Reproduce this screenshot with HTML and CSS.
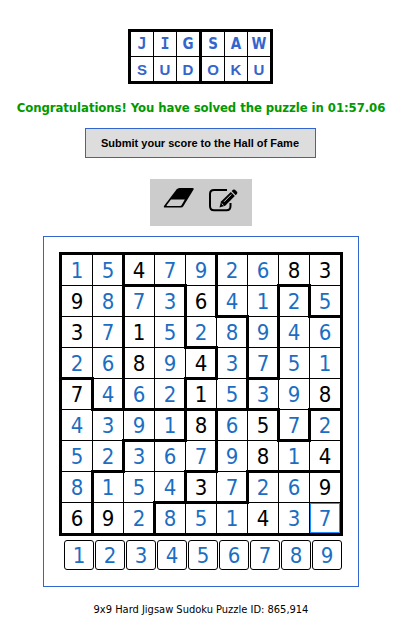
FILE: index.html
```html
<!DOCTYPE html>
<html lang="en">
<head>
<meta charset="utf-8">
<title>Jigsaw Sudoku</title>
<link rel="stylesheet" href="styles.css">
</head>
<body>
<main class="page">
  <div class="logo">
    <div class="logo-half">
      <b class="top slab">J</b><b class="top slab">I</b><b class="top">G</b>
      <b>S</b><b>U</b><b>D</b>
    </div>
    <div class="logo-half">
      <b class="top">S</b><b class="top">A</b><b class="top">W</b>
      <b>O</b><b>K</b><b>U</b>
    </div>
  </div>
  <p class="message">Congratulations! You have solved the puzzle in 01:57.06</p>
  <button class="submit">Submit your score to the Hall of Fame</button>
  <div class="tools">
    <svg class="eraser" width="32" height="22" viewBox="0 0 32 22">
      <path d="M16.500 1H29.500Q31.500 1 30.400 2.800L20.300 19.300Q19.500 20.600 18 20.600H2Q0 20.600 1.200 18.800L13.500 2.500Q14.700 1 16.500 1Z"/>
      <path class="paper" d="M8 12.500H21.800L18.500 18.200Q18 19 17 19H4.200Q3 19 3.800 17.900Z"/>
    </svg>
    <svg class="pencil" width="29" height="24" viewBox="0 0 29 24">
      <path class="line" d="M18 2H5Q1 2 1 6V18Q1 22.300 5 22.300H17.500Q21.500 22.300 21.500 18V15"/>
      <path d="M10.500 19.500L12 13.500L21.800 4L25.800 8L16.200 17.800Z"/>
      <path d="M22.600 3.100L24 1.800Q25 1 26 1.800L28 3.800Q28.800 4.700 28 5.700L26.700 7.200Z"/>
      <path class="shine" d="M15 13.800L22.300 6.500M12.700 15.500L14.500 17.300"/>
    </svg>
  </div>
  <section class="game">
    <div class="board" id="board"></div>
    <div class="keys">
      <span>1</span><span>2</span><span>3</span><span>4</span><span>5</span><span>6</span><span>7</span><span>8</span><span>9</span>
    </div>
  </section>
  <p class="footer">9x9 Hard Jigsaw Sudoku Puzzle ID: 865,914</p>
</main>
<script src="board.js"></script>
</body>
</html>
```
FILE: styles.css
```css
* { box-sizing: border-box; }
body { margin: 0; background: #fff; font-family: "DejaVu Sans Condensed", "DejaVu Sans", sans-serif; font-stretch: condensed; }
.page { width: 402px; height: 625px; padding-top: 29px; display: flex; flex-direction: column; align-items: center; }
.logo { display: flex; gap: 3px; padding: 3px; background: #000; width: 145px; height: 55px; margin-right: 1px; }
.logo-half { display: grid; grid-template-columns: repeat(3, 22px); grid-template-rows: repeat(2, 24px); gap: 1px; }
.logo b { background: #fff; color: #36c; font: bold 15px/25px "Liberation Sans", sans-serif; text-align: center; }
.logo .top { font: bold 15px/24px "DejaVu Sans Condensed", "DejaVu Sans", sans-serif; font-stretch: condensed; }
.logo .slab { font: bold 15px/24px "DejaVu Sans Mono", monospace; }
.message { margin: 15px 0 0; font-size: 13px; line-height: 18px; font-weight: bold; color: #090; white-space: nowrap; letter-spacing: -0.07px; }
.submit { margin: 11px 2px 0 0; width: 231px; height: 30px; padding: 0; border: 1px solid #36c; background: #ddd; color: #000; font: bold 11px "Liberation Sans", sans-serif; white-space: nowrap; }
.tools { margin-top: 21px; width: 102px; height: 47px; background: #ccc; display: flex; align-items: flex-start; gap: 14px; padding: 8px 0 0 13px; }
.eraser .paper { fill: #ccc; }
.pencil { margin-top: 1px; }
.pencil .line { fill: none; stroke: #000; stroke-width: 2; }
.pencil .shine { fill: none; stroke: #ccc; stroke-width: 1; }
.game { margin-top: 10px; width: 316px; height: 351px; border: 1px solid #36c; padding: 15px; }
.board { display: grid; grid-template-columns: repeat(9, 30px); grid-template-rows: repeat(9, 30px); gap: 1px; width: 284px; height: 284px; border: 3px solid #000; background: #000; }
.cell { position: relative; background: #fff; color: #1b6ec2; font-size: 22px; line-height: 31px; text-align: center; }
.cell.given { color: #000; }
.cell.selected { border: 1px solid #1e90ff; line-height: 29px; }
.cell.wall-right::before { content: ""; position: absolute; z-index: 1; top: -2px; bottom: -2px; right: -2px; width: 3px; background: #000; }
.cell.wall-bottom::after { content: ""; position: absolute; z-index: 1; left: -2px; right: -2px; bottom: -2px; height: 3px; background: #000; }
.keys { display: flex; gap: 1px; margin: 4px 0 0 5px; }
.keys span { width: 30px; height: 30px; border: 1px solid #000; border-radius: 3px; color: #1b6ec2; font-size: 22px; line-height: 30px; text-align: center; }
.footer { margin: 15px 0 0; font-size: 11px; line-height: 16px; color: #000; white-space: nowrap; }
```
FILE: board.js
```js
const digits = [
  "154792683", "987364125", "371528946",
  "268943751", "746215398", "439186572",
  "523679814", "815437269", "692851437"
];
const givens = [
  "..4....83", "9...6....", "3.1......",
  "..8.4....", "7...1...8", "....8.5..",
  "......8.4", "....3...9", "69....4.."
];
const regions = [
  "AABBBCCCC", "AADDBCCEC", "AADDBBCEE",
  "AADDDBCEE", "FADDBBEEE", "FFFFGHHEH",
  "FFGGGHHHH", "FGGGHHIII", "FGGIIIIII"
];
const board = document.getElementById("board");
for (let r = 0; r < 9; r++) {
  for (let c = 0; c < 9; c++) {
    const cell = document.createElement("div");
    cell.className = "cell";
    cell.textContent = digits[r][c];
    if (givens[r][c] !== ".") cell.classList.add("given");
    if (c < 8 && regions[r][c] !== regions[r][c + 1]) cell.classList.add("wall-right");
    if (r < 8 && regions[r][c] !== regions[r + 1][c]) cell.classList.add("wall-bottom");
    if (r === 8 && c === 8) cell.classList.add("selected");
    board.appendChild(cell);
  }
}
```
